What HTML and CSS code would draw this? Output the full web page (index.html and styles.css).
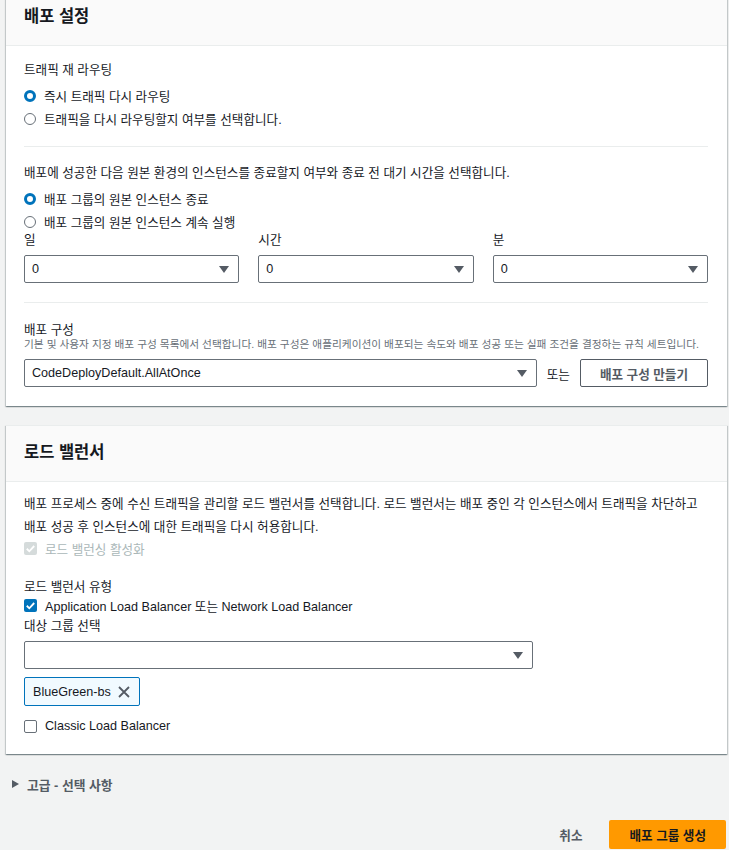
FILE: index.html
```html
<!DOCTYPE html>
<html lang="ko">
<head>
    <meta charset="UTF-8">
    <meta name="viewport" content="width=device-width, initial-scale=1.0">
    <title>배포 그룹 생성</title>
    <link rel="stylesheet" href="styles.css">
</head>
<body>
<div class="page">

    <div class="card first">
        <div class="card-head"><h2>배포 설정</h2></div>
        <div class="card-body">
            <div class="section traffic">
                <div class="label">트래픽 재 라우팅</div>
                <div class="options">
                    <div class="option"><span class="radio on"></span>즉시 트래픽 다시 라우팅</div>
                    <div class="option"><span class="radio"></span>트래픽을 다시 라우팅할지 여부를 선택합니다.</div>
                </div>
            </div>

            <div class="section terminate">
                <div class="label">배포에 성공한 다음 원본 환경의 인스턴스를 종료할지 여부와 종료 전 대기 시간을 선택합니다.</div>
                <div class="options">
                    <div class="option"><span class="radio on"></span>배포 그룹의 원본 인스턴스 종료</div>
                    <div class="option"><span class="radio"></span>배포 그룹의 원본 인스턴스 계속 실행</div>
                </div>
                <div class="wait-grid">
                    <div>
                        <div class="field-label">일</div>
                        <div class="select"><span>0</span><span class="arrow"></span></div>
                    </div>
                    <div>
                        <div class="field-label">시간</div>
                        <div class="select"><span>0</span><span class="arrow"></span></div>
                    </div>
                    <div>
                        <div class="field-label">분</div>
                        <div class="select"><span>0</span><span class="arrow"></span></div>
                    </div>
                </div>
            </div>

            <div class="section config">
                <div class="label tight">배포 구성</div>
                <div class="hint">기본 및 사용자 지정 배포 구성 목록에서 선택합니다. 배포 구성은 애플리케이션이 배포되는 속도와 배포 성공 또는 실패 조건을 결정하는 규칙 세트입니다.</div>
                <div class="config-row">
                    <div class="select grow"><span>CodeDeployDefault.AllAtOnce</span><span class="arrow"></span></div>
                    <span>또는</span>
                    <button class="btn">배포 구성 만들기</button>
                </div>
            </div>
        </div>
    </div>

    <div class="card">
        <div class="card-head"><h2>로드 밸런서</h2></div>
        <div class="card-body lb">
            <p class="intro">배포 프로세스 중에 수신 트래픽을 관리할 로드 밸런서를 선택합니다. 로드 밸런서는 배포 중인 각 인스턴스에서 트래픽을 차단하고<br>배포 성공 후 인스턴스에 대한 트래픽을 다시 허용합니다.</p>
            <div class="option disabled short">
                <span class="check off-state"><svg viewBox="0 0 14 14"><path d="M3 7.3l2.7 2.7L11 4.3" stroke="#fff" stroke-width="2" fill="none"/></svg></span>로드 밸런싱 활성화
            </div>

            <div class="label shifted lb-type">로드 밸런서 유형</div>
            <div class="option short">
                <span class="check on"><svg viewBox="0 0 14 14"><path d="M3 7.3l2.7 2.7L11 4.3" stroke="#fff" stroke-width="2" fill="none"/></svg></span>Application Load Balancer 또는 Network Load Balancer
            </div>
            <div class="label shifted">대상 그룹 선택</div>
            <div class="select target"><span></span><span class="arrow"></span></div>
            <div class="token">
                BlueGreen-bs
                <svg class="remove" viewBox="0 0 12 12"><path d="M1 1l10 10M11 1L1 11" stroke="#545b64" stroke-width="1.8" fill="none"/></svg>
            </div>
            <div class="option classic"><span class="check"></span>Classic Load Balancer</div>
        </div>
    </div>

    <div class="advanced"><span class="caret"></span>고급 - 선택 사항</div>

    <div class="actions">
        <span class="cancel">취소</span>
        <button class="primary">배포 그룹 생성</button>
    </div>

</div>
</body>
</html>
```

FILE: styles.css
```css
body {
    margin: 0;
    background-color: #f2f3f3;
    font-family: "Liberation Sans", "Noto Sans CJK KR", sans-serif;
    font-size: 12.6px;
    color: #16191f;
}
.page {
    width: 721px;
    margin-left: 6px;
}
.card {
    background: #fff;
    border-top: 1px solid #eaeded;
    box-shadow: 0 1px 1px 0 rgba(0, 28, 36, 0.3), 1px 1px 1px 0 rgba(0, 28, 36, 0.15), -1px 1px 1px 0 rgba(0, 28, 36, 0.15);
}
.card.first {
    margin-top: -11px;
}
.card + .card {
    margin-top: 19px;
}
.card-head {
    height: 56px;
    box-sizing: border-box;
    padding: 0 18px 4px;
    display: flex;
    align-items: center;
    background: #fafafa;
    border-bottom: 1px solid #eaeded;
}
.card-head h2 {
    margin: 0;
    font-size: 16.5px;
    line-height: 20px;
    font-weight: 700;
}
.card-body {
    padding: 0 19px 0 18px;
}
.section {
    border-bottom: 1px solid #eaeded;
}
.traffic {
    padding: 14px 0 16px;
}
.terminate {
    padding: 16px 0 19px;
}
.config {
    padding: 17px 0 19px;
    border-bottom: none;
}
.label {
    line-height: 20px;
}
.label.tight {
    padding-top: 2px;
    line-height: 16px;
}
.label.shifted {
    padding-top: 2px;
    line-height: 18px;
}
.options {
    margin-top: 4px;
}
.option {
    display: flex;
    align-items: center;
    gap: 8px;
    height: 23px;
}
.radio {
    width: 12px;
    height: 12px;
    box-sizing: border-box;
    border: 1.2px solid #687078;
    border-radius: 50%;
    background: #fff;
    flex-shrink: 0;
}
.radio.on {
    border: 3.5px solid #0073bb;
}
.check {
    width: 13px;
    height: 13px;
    box-sizing: border-box;
    border: 1px solid #687078;
    border-radius: 2px;
    background: #fff;
    flex-shrink: 0;
    display: flex;
}
.check svg {
    width: 100%;
    height: 100%;
}
.check.on {
    border: none;
    background: #0073bb;
}
.check.off-state {
    border: none;
    background: #d5dbdb;
}
.disabled {
    color: #aab7b8;
}
.wait-grid {
    display: grid;
    grid-template-columns: 1fr 1fr 1fr;
    gap: 19px;
}
.field-label {
    line-height: 14px;
}
.select {
    height: 28px;
    box-sizing: border-box;
    margin-top: 8px;
    padding: 0 9px 0 7px;
    border: 1px solid #687078;
    border-radius: 2px;
    display: flex;
    align-items: center;
    justify-content: space-between;
    background: #fff;
}
.arrow {
    width: 0;
    height: 0;
    border-left: 5px solid transparent;
    border-right: 5px solid transparent;
    border-top: 7px solid #545b64;
}
.hint {
    font-size: 10.7px;
    line-height: 12px;
    color: #687078;
    white-space: nowrap;
}
.config-row {
    margin-top: 9px;
    display: flex;
    align-items: center;
    gap: 10px;
}
.config-row .select {
    margin-top: 0;
}
.grow {
    flex: 1;
}
.btn {
    height: 28px;
    padding: 0 19px;
    border: 1px solid #545b64;
    border-radius: 2px;
    background: #fff;
    font: inherit;
    font-weight: 700;
    color: #545b64;
}
.lb {
    padding-bottom: 18px;
}
.intro {
    margin: 0;
    padding-top: 11px;
    line-height: 23px;
}
.option.short {
    height: 19px;
}
.lb-type {
    margin-top: 18px;
}
.select.target {
    width: 509px;
    margin-top: 6px;
}
.token {
    margin-top: 8px;
    height: 29px;
    width: 116px;
    box-sizing: border-box;
    padding: 0 9px 0 8px;
    display: flex;
    align-items: center;
    justify-content: space-between;
    background: #f1faff;
    border: 1px solid #0073bb;
    border-radius: 2px;
}
.remove {
    width: 12px;
    height: 12px;
}
.option.classic {
    margin-top: 10px;
    height: 20px;
}
.advanced {
    margin-top: 20px;
    height: 20px;
    padding-left: 6px;
    display: flex;
    align-items: center;
    gap: 8px;
    font-size: 12.8px;
    font-weight: 700;
    color: #545b64;
}
.caret {
    width: 0;
    height: 0;
    border-top: 4px solid transparent;
    border-bottom: 4px solid transparent;
    border-left: 7px solid #545b64;
}
.actions {
    margin-top: 26px;
    padding-right: 1px;
    display: flex;
    justify-content: flex-end;
    align-items: center;
    gap: 27px;
}
.cancel {
    font-weight: 700;
    color: #545b64;
}
.primary {
    height: 29px;
    padding: 0 20px;
    border: none;
    border-radius: 2px;
    background: #ff9900;
    font: inherit;
    font-weight: 700;
    color: #16191f;
}
```
